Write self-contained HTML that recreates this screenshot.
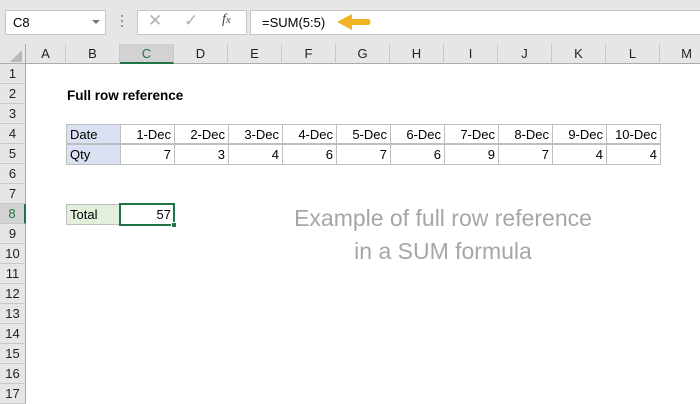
<!DOCTYPE html>
<html><head><style>
*{margin:0;padding:0;box-sizing:border-box}
body{width:700px;height:400px;overflow:hidden;background:#fff;font-family:"Liberation Sans",Arial,sans-serif;font-size:13px;color:#000;position:relative}
.a{position:absolute}
.top{left:0;top:0;width:700px;height:44px;background:#e6e6e6}
.box{background:#fff;border:1px solid #c6c6c6}
.ch{top:44px;height:20px;background:#e6e6e6;border-right:1px solid #c8c8c8;border-bottom:1px solid #ababab;text-align:center;line-height:20px;font-size:13px;color:#222}
.rh{left:0;width:26px;height:20px;background:#e6e6e6;border-bottom:1px solid #c8c8c8;border-right:1px solid #ababab;text-align:center;line-height:20px;color:#222}
.c{height:20px;line-height:20px;padding:0 3px;border:1px solid #bfbfbf;background:#fff}
.r{text-align:right}
</style></head><body>
<div class="a top"></div>
<div class="a box" style="left:5px;top:10px;width:101px;height:25px;line-height:23px;padding-left:7px">C8</div>
<div class="a" style="left:92px;top:20px;width:0;height:0;border-left:4px solid transparent;border-right:4px solid transparent;border-top:4px solid #777"></div>
<div class="a" style="left:121px;top:15px;width:2px;height:2px;background:#999;box-shadow:0 5px #999,0 10px #999"></div>
<div class="a box" style="left:137px;top:10px;width:110px;height:25px"></div>
<div class="a" style="left:148px;top:11px;font-size:17px;color:#b0b0b0">✕</div>
<div class="a" style="left:184px;top:11px;font-size:17px;color:#b0b0b0">✓</div>
<div class="a" style="left:222px;top:12px;font-family:'Liberation Serif',serif;font-style:italic;font-size:14px;color:#444"><i>f</i><span style="font-size:11px">x</span></div>
<div class="a box" style="left:250px;top:10px;width:452px;height:25px;line-height:23px;padding-left:11px">=SUM(5:5)</div>
<svg class="a" style="left:335px;top:12px" width="40" height="22"><path d="M2 10 L17 2 L17 7 L34 7 Q37 10 34 13 L17 13 L17 18 Z" fill="#f0b323"/></svg>
<div class="a" style="left:0;top:44px;width:26px;height:20px;background:#e6e6e6;border-right:1px solid #ababab;border-bottom:1px solid #ababab"></div>
<div class="a" style="left:10px;top:50px;width:0;height:0;border-left:12px solid transparent;border-bottom:12px solid #b8b8b8"></div>
<div class="a ch" style="left:26px;width:40px">A</div>
<div class="a ch" style="left:66px;width:54px">B</div>
<div class="a ch" style="left:120px;width:54px;background:#d2d2d2;border-bottom:2px solid #217346;color:#217346">C</div>
<div class="a ch" style="left:174px;width:54px">D</div>
<div class="a ch" style="left:228px;width:54px">E</div>
<div class="a ch" style="left:282px;width:54px">F</div>
<div class="a ch" style="left:336px;width:54px">G</div>
<div class="a ch" style="left:390px;width:54px">H</div>
<div class="a ch" style="left:444px;width:54px">I</div>
<div class="a ch" style="left:498px;width:54px">J</div>
<div class="a ch" style="left:552px;width:54px">K</div>
<div class="a ch" style="left:606px;width:54px">L</div>
<div class="a ch" style="left:660px;width:54px">M</div>
<div class="a rh" style="top:64px">1</div>
<div class="a rh" style="top:84px">2</div>
<div class="a rh" style="top:104px">3</div>
<div class="a rh" style="top:124px">4</div>
<div class="a rh" style="top:144px">5</div>
<div class="a rh" style="top:164px">6</div>
<div class="a rh" style="top:184px">7</div>
<div class="a rh" style="top:204px;background:#d2d2d2;border-right:2px solid #217346;color:#217346">8</div>
<div class="a rh" style="top:224px">9</div>
<div class="a rh" style="top:244px">10</div>
<div class="a rh" style="top:264px">11</div>
<div class="a rh" style="top:284px">12</div>
<div class="a rh" style="top:304px">13</div>
<div class="a rh" style="top:324px">14</div>
<div class="a rh" style="top:344px">15</div>
<div class="a rh" style="top:364px">16</div>
<div class="a rh" style="top:384px">17</div>
<div class="a" style="left:67px;top:86px;font-weight:bold;line-height:20px;font-size:13.5px">Full row reference</div>
<div class="a c" style="left:66px;top:124px;width:55px;background:#d9e1f2">Date</div>
<div class="a c" style="left:66px;top:144px;width:55px;height:21px;background:#d9e1f2">Qty</div>
<div class="a c r" style="left:120px;top:124px;width:55px">1-Dec</div>
<div class="a c r" style="left:174px;top:124px;width:55px">2-Dec</div>
<div class="a c r" style="left:228px;top:124px;width:55px">3-Dec</div>
<div class="a c r" style="left:282px;top:124px;width:55px">4-Dec</div>
<div class="a c r" style="left:336px;top:124px;width:55px">5-Dec</div>
<div class="a c r" style="left:390px;top:124px;width:55px">6-Dec</div>
<div class="a c r" style="left:444px;top:124px;width:55px">7-Dec</div>
<div class="a c r" style="left:498px;top:124px;width:55px">8-Dec</div>
<div class="a c r" style="left:552px;top:124px;width:55px">9-Dec</div>
<div class="a c r" style="left:606px;top:124px;width:55px">10-Dec</div>
<div class="a c r" style="left:120px;top:144px;width:55px;height:21px">7</div>
<div class="a c r" style="left:174px;top:144px;width:55px;height:21px">3</div>
<div class="a c r" style="left:228px;top:144px;width:55px;height:21px">4</div>
<div class="a c r" style="left:282px;top:144px;width:55px;height:21px">6</div>
<div class="a c r" style="left:336px;top:144px;width:55px;height:21px">7</div>
<div class="a c r" style="left:390px;top:144px;width:55px;height:21px">6</div>
<div class="a c r" style="left:444px;top:144px;width:55px;height:21px">9</div>
<div class="a c r" style="left:498px;top:144px;width:55px;height:21px">7</div>
<div class="a c r" style="left:552px;top:144px;width:55px;height:21px">4</div>
<div class="a c r" style="left:606px;top:144px;width:55px;height:21px">4</div>
<div class="a c" style="left:66px;top:204px;width:55px;height:21px;background:#e2efda">Total</div>
<div class="a" style="left:119px;top:203px;width:56px;height:23px;border:2px solid #217346;background:#fff;text-align:right;padding-right:2px;line-height:19px">57</div>
<div class="a" style="left:171px;top:222px;width:6px;height:6px;background:#217346;border:1px solid #fff"></div>
<div class="a" style="left:260px;top:202px;width:366px;text-align:center;color:#a6a6a6;font-size:23px;line-height:33px">Example of full row reference<br>in a SUM formula</div>
</body></html>
